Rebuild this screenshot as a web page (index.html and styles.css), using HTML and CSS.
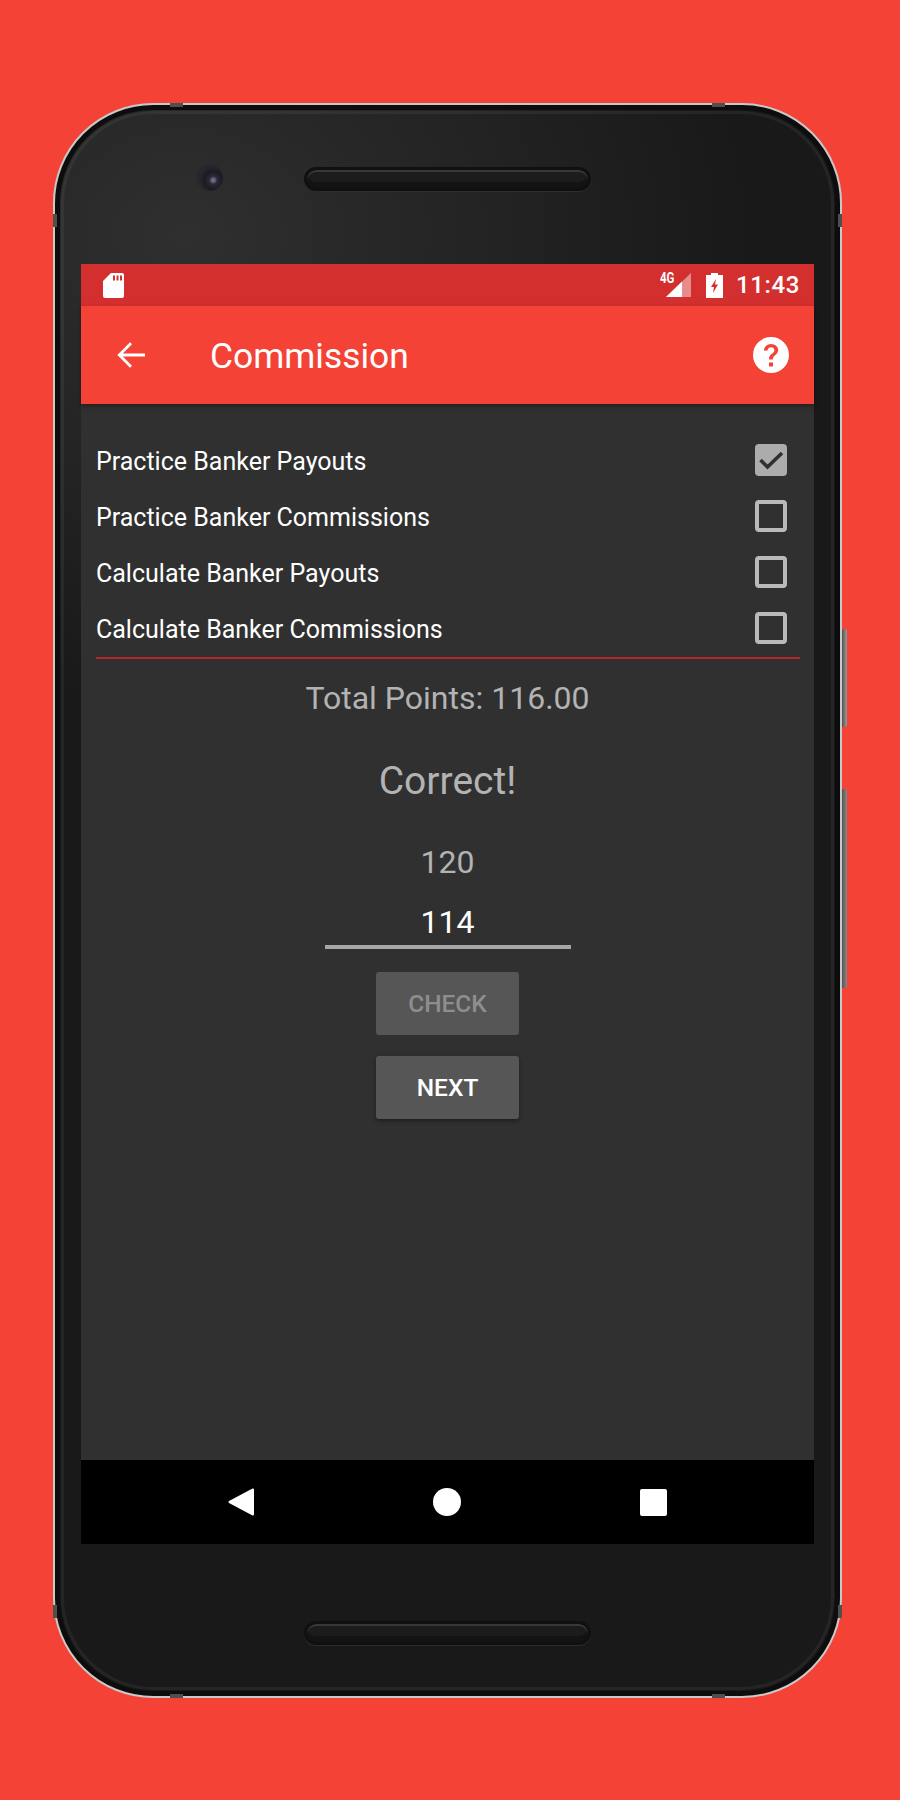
FILE: index.html
```html
<!DOCTYPE html>
<html lang="en">
<head>
<meta charset="utf-8">
<title>Commission</title>
<link rel="stylesheet" href="styles.css">
</head>
<body>
<div class="phone">
  <span class="seam seam-tl"></span><span class="seam seam-tr"></span>
  <span class="seam seam-bl"></span><span class="seam seam-br"></span>
  <span class="seam seam-lt"></span><span class="seam seam-rt"></span>
  <span class="seam seam-lb"></span><span class="seam seam-rb"></span>
  <span class="side side-power"></span><span class="side side-volume"></span>
  <div class="inner-edge"></div>
  <div class="bezel bezel-top">
    <span class="camera"></span>
    <span class="speaker"></span>
  </div>
  <div class="screen">
    <div class="statusbar">
      <svg class="sd" viewBox="0 0 21 25"><path fill="#fff" fill-rule="evenodd" d="M8 0h11a2 2 0 0 1 2 2v21a2 2 0 0 1-2 2H2a2 2 0 0 1-2-2V8zM10 2.500v5h2v-5zM13.500 2.500v5h2v-5zM17 2.500v5h2v-5z"/></svg>
      <div class="status-right">
        <span class="net">4G</span>
        <svg class="signal" viewBox="0 0 25 24"><path fill="#fff" fill-opacity=".45" d="M25 0v24H0z"/><path fill="#fff" d="M16 8.600V24H0z"/></svg>
        <svg class="battery" viewBox="0 0 17 25"><path fill="#fff" fill-rule="evenodd" d="M5 0h7v2h5v23H0V2h5zM10 6L5 14h3l-1 6 5-8.500H9z"/></svg>
        <span class="clock">11:43</span>
      </div>
    </div>
    <div class="appbar">
      <svg class="back" viewBox="0 0 30 28"><path fill="none" stroke="#fff" stroke-width="3" d="M30 14H3M15 1.500L2.500 14 15 26.500"/></svg>
      <span class="title">Commission</span>
      <svg class="help" viewBox="0 0 36 36"><path fill="#fff" fill-rule="evenodd" d="M18 0a18 18 0 1 1 0 36a18 18 0 0 1 0-36zM16 25.500v4h4v-4zM18 7c-4 0-7 3-7 6.500h3.600c0-1.900 1.500-3.200 3.400-3.200s3.400 1.300 3.400 3c0 3.500-5.400 3.300-5.400 9.200h3.800c0-4.200 5.400-4.700 5.400-9.400C25.200 9.800 22 7 18 7z"/></svg>
    </div>
    <div class="content">
      <div class="options">
        <div class="option"><span>Practice Banker Payouts</span>
          <span class="box box-on"><svg viewBox="0 0 32 32"><path fill="none" stroke="#303030" stroke-width="3.600" d="M5.500 16l7 7L27 9"/></svg></span></div>
        <div class="option"><span>Practice Banker Commissions</span><span class="box"></span></div>
        <div class="option"><span>Calculate Banker Payouts</span><span class="box"></span></div>
        <div class="option"><span>Calculate Banker Commissions</span><span class="box"></span></div>
      </div>
      <div class="quiz">
        <div class="points">Total Points: 116.00</div>
        <div class="result">Correct!</div>
        <div class="question">120</div>
        <div class="answer">114</div>
        <div class="btn btn-off">CHECK</div>
        <div class="btn btn-on">NEXT</div>
      </div>
    </div>
    <div class="navbar">
      <svg class="nav-back" viewBox="0 0 26 28"><path fill="#fff" stroke="#fff" stroke-width="2" stroke-linejoin="round" d="M25 1.500v25L1.500 14z"/></svg>
      <span class="nav-home"></span>
      <span class="nav-recent"></span>
    </div>
  </div>
  <div class="bezel bezel-bottom">
    <span class="speaker"></span>
  </div>
</div>
</body>
</html>
```

FILE: styles.css
```css
html, body {
  margin: 0;
  padding: 0;
}
body {
  width: 900px;
  height: 1800px;
  background: #f44336;
  font-family: Roboto, "Liberation Sans", sans-serif;
  overflow: hidden;
  box-sizing: border-box;
  padding: 103px 0 0 53px;
}
.phone {
  position: relative;
  box-sizing: border-box;
  width: 789px;
  height: 1595px;
  border-radius: 100px;
  border: 2px solid #c9c9c9;
  padding: 0 26px;
  background:
    radial-gradient(ellipse 560px 460px at 130px 130px, #2f2f2f 0%, rgba(47,47,47,0) 100%),
    #191919;
  box-shadow: inset 0 0 0 5px #0d0d0d;
  display: flex;
  flex-direction: column;
}
.inner-edge {
  position: absolute;
  inset: 6px;
  border-radius: 93px;
  border: 3px solid rgba(255,255,255,.055);
  pointer-events: none;
}
.seam {
  position: absolute;
  background: #4f4f4f;
}
.seam-tl, .seam-tr, .seam-bl, .seam-br { width: 13px; height: 4px; }
.seam-lt, .seam-rt, .seam-lb, .seam-rb { width: 4px; height: 13px; }
.seam-tl { left: 115px; top: -2px; }
.seam-tr { right: 115px; top: -2px; }
.seam-bl { left: 115px; bottom: -2px; }
.seam-br { right: 115px; bottom: -2px; }
.seam-lt { left: -2px; top: 109px; }
.seam-rt { right: -2px; top: 109px; }
.seam-lb { left: -2px; bottom: 78px; }
.seam-rb { right: -2px; bottom: 78px; }
.side {
  position: absolute;
  right: -7px;
  width: 5px;
  background: linear-gradient(90deg, #555, #9a9a9a);
  border-radius: 0 2px 2px 0;
}
.side-power { top: 524px; height: 98px; }
.side-volume { top: 684px; height: 199px; background: linear-gradient(90deg, #555, #888); }
.bezel {
  position: relative;
  display: flex;
  justify-content: center;
  flex: none;
}
.bezel-top {
  height: 159px;
  padding-top: 62px;
  box-sizing: border-box;
}
.bezel-bottom {
  height: 152px;
  padding-top: 77px;
  box-sizing: border-box;
}
.camera {
  position: absolute;
  left: 115px;
  top: 59px;
  width: 27px;
  height: 27px;
  border-radius: 50%;
  background: radial-gradient(circle at 64% 60%, #6e6880 0 1.500px, #2b2a38 4px, #1b1b22 9px, #28282c 14px);
}
.speaker {
  box-sizing: border-box;
  width: 287px;
  height: 24px;
  border-radius: 12px;
  background: #1c1c1c;
  border: 3px solid #101010;
  box-shadow: inset 0 2px 0 #383838, inset 0 -6px 0 #131313, 0 1px 0 #2c2c2c;
}
.screen {
  flex: none;
  width: 733px;
  height: 1280px;
  display: flex;
  flex-direction: column;
  background: #303030;
}
.statusbar {
  flex: none;
  box-sizing: border-box;
  height: 42px;
  background: #d32f2f;
  display: flex;
  align-items: center;
  justify-content: space-between;
  padding: 0 14px 0 22px;
  color: #fff;
}
.sd { width: 21px; height: 25px; }
.status-right {
  position: relative;
  display: flex;
  align-items: center;
}
.net {
  position: absolute;
  left: 4px;
  top: 0;
  font-size: 14px;
  font-weight: 700;
  line-height: 14px;
  transform: scaleX(.82);
  transform-origin: left;
}
.signal { width: 25px; height: 24px; margin-left: 10px; }
.battery { width: 17px; height: 25px; margin-left: 15px; }
.clock {
  margin-left: 13px;
  font-size: 24px;
  font-weight: 500;
  letter-spacing: .6px;
  line-height: 28px;
}
.appbar {
  position: relative;
  flex: none;
  box-sizing: border-box;
  height: 98px;
  background: #f44336;
  display: flex;
  align-items: center;
  padding: 0 25px 0 36px;
  color: #fff;
  box-shadow: 0 2px 4px rgba(0,0,0,.35);
}
.back { width: 28px; height: 28px; flex: none; }
.title {
  margin-left: 65px;
  padding-top: 2px;
  font-size: 35.400px;
  flex: 1;
}
.help { width: 36px; height: 36px; flex: none; }
.content {
  flex: 1;
  box-sizing: border-box;
  padding: 29px 14px 0 15px;
  display: flex;
  flex-direction: column;
}
.options {
  border-bottom: 2px solid #b3282b;
}
.option {
  height: 56px;
  display: flex;
  align-items: center;
  justify-content: space-between;
  color: #fff;
  font-size: 25px;
  padding-right: 13px;
}
.option > span:first-child {
  padding-top: 1px;
}
.box {
  box-sizing: border-box;
  width: 32px;
  height: 32px;
  border: 4px solid #b9b9b9;
  border-radius: 4px;
  flex: none;
  position: relative;
  margin-bottom: 3px;
}
.box-on {
  border: 0;
  background: #acacac;
}
.box-on svg {
  width: 32px;
  height: 32px;
  display: block;
}
.quiz {
  display: flex;
  flex-direction: column;
  align-items: center;
  padding-right: 1px;
}
.points {
  margin-top: 20px;
  font-size: 32px;
  line-height: 38px;
  color: #b3b3b3;
}
.result {
  margin-top: 41px;
  font-size: 39px;
  line-height: 46px;
  color: #b3b3b3;
}
.question {
  margin-top: 39px;
  font-size: 32px;
  line-height: 38px;
  color: #b3b3b3;
}
.answer {
  box-sizing: border-box;
  width: 246px;
  margin-top: 22px;
  height: 46px;
  border-bottom: 4px solid #a6a6a6;
  text-align: center;
  font-size: 32px;
  line-height: 38px;
  color: #fff;
}
.btn {
  box-sizing: border-box;
  width: 143px;
  height: 63px;
  display: flex;
  align-items: center;
  justify-content: center;
  border-radius: 3px;
  background: #565656;
  font-size: 24.500px;
  font-weight: 500;
}
.btn-off {
  margin-top: 23px;
  color: #8e8e8e;
}
.btn-on {
  margin-top: 21px;
  color: #fff;
  box-shadow: 0 2px 4px rgba(0,0,0,.4);
}
.navbar {
  flex: none;
  box-sizing: border-box;
  height: 84px;
  background: #000;
  display: flex;
  align-items: center;
  padding-left: 147px;
}
.nav-back { width: 26px; height: 28px; flex: none; }
.nav-home {
  margin-left: 179px;
  width: 28px;
  height: 28px;
  border-radius: 50%;
  background: #fff;
  flex: none;
}
.nav-recent {
  margin-left: 179px;
  width: 27px;
  height: 27px;
  border-radius: 2px;
  background: #fff;
  flex: none;
}
```
